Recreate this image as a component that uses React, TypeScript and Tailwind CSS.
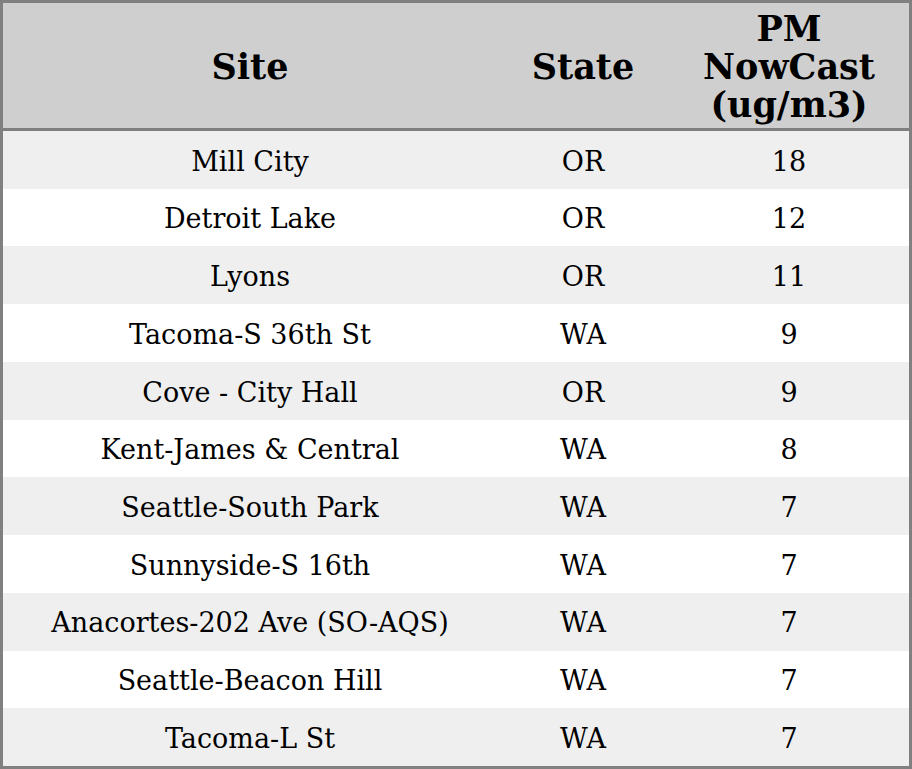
const rows: [string, string, string][] = [
  ["Mill City", "OR", "18"],
  ["Detroit Lake", "OR", "12"],
  ["Lyons", "OR", "11"],
  ["Tacoma-S 36th St", "WA", "9"],
  ["Cove - City Hall", "OR", "9"],
  ["Kent-James & Central", "WA", "8"],
  ["Seattle-South Park", "WA", "7"],
  ["Sunnyside-S 16th", "WA", "7"],
  ["Anacortes-202 Ave (SO-AQS)", "WA", "7"],
  ["Seattle-Beacon Hill", "WA", "7"],
  ["Tacoma-L St", "WA", "7"],
];

export default function App() {
  return (
    <div className="h-[769px] w-[912px] bg-white font-['DejaVu_Serif',serif] text-black">
      <div className="flex h-full flex-col border-[3px] border-[#808080]">
        <div className="flex h-[128px] shrink-0 items-center border-b-[3px] border-[#808080] bg-[#cfcfcf] pt-[2px] text-[35px] font-bold leading-[38px]">
          <div className="w-[494px] text-center">Site</div>
          <div className="w-[172px] text-center">State</div>
          <div className="flex-1 text-center">
            PM
            <br />
            NowCast
            <br />
            (ug/m3)
          </div>
        </div>
        <div className="flex flex-1 flex-col text-[27px]">
          {rows.map(([site, state, pm], i) => (
            <div key={site} className={`flex flex-1 items-center pt-[4px] ${i % 2 === 0 ? "bg-[#efefef]" : "bg-white"}`}>
              <div className="w-[494px] text-center">{site}</div>
              <div className="w-[172px] text-center">{state}</div>
              <div className="flex-1 text-center">{pm}</div>
            </div>
          ))}
        </div>
      </div>
    </div>
  );
}
